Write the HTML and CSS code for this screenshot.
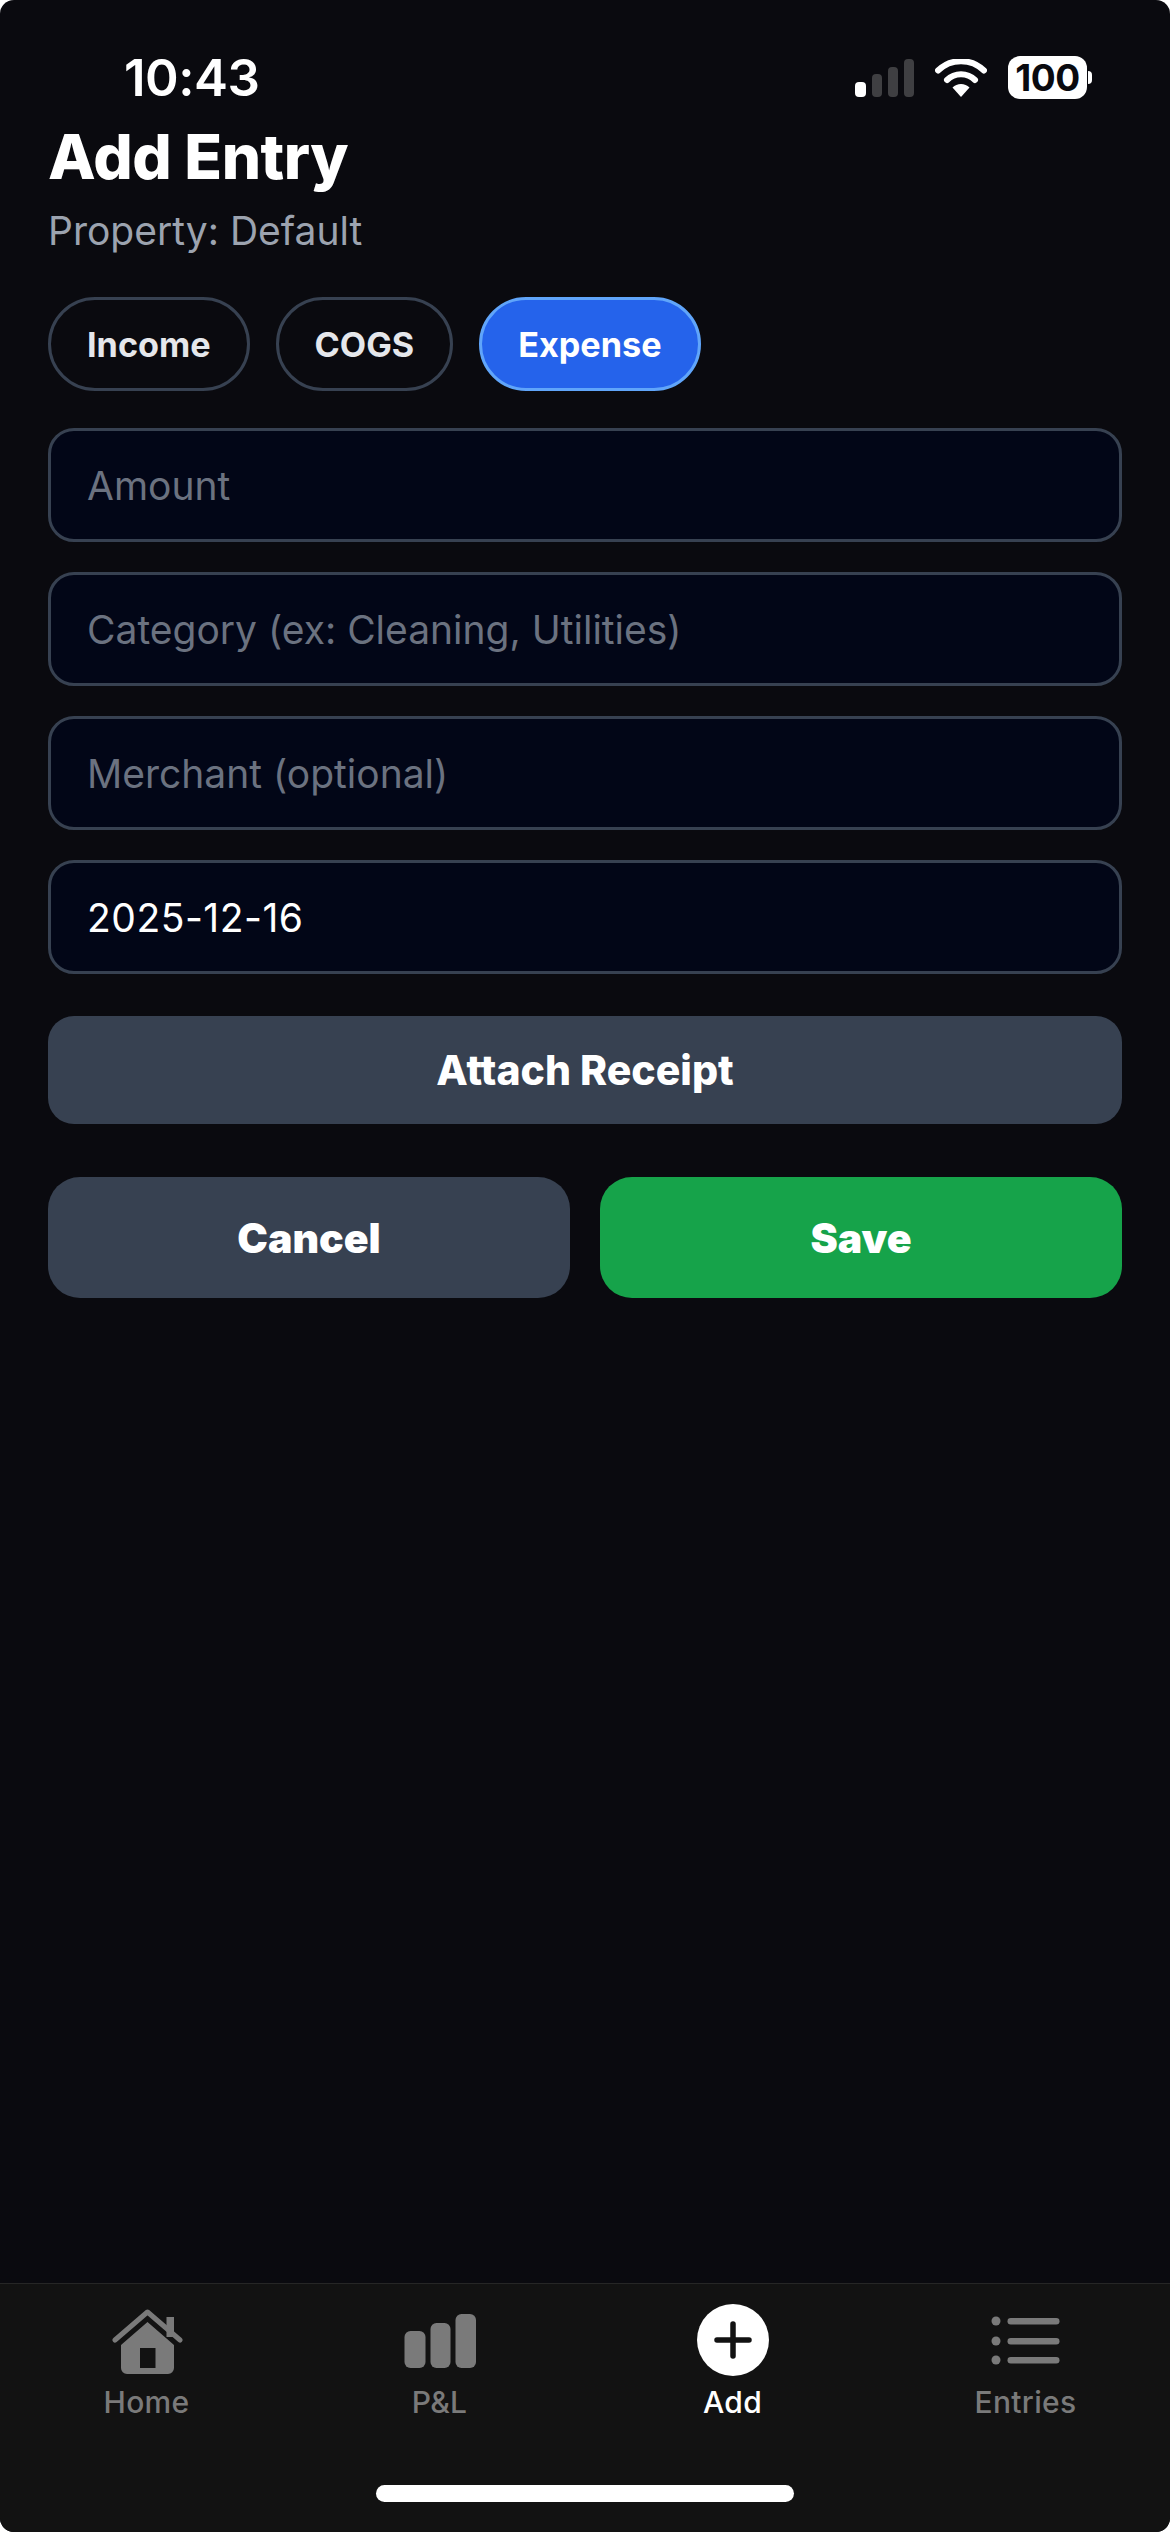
FILE: index.html
```html
<!DOCTYPE html>
<html lang="en">
<head>
<meta charset="utf-8">
<title>Add Entry</title>
<link rel="stylesheet" href="styles.css">
</head>
<body>
<div class="screen">
  <div class="status">
    <span class="time">10:43</span>
    <div class="status-icons">
      <svg class="signal" width="59" height="38" viewBox="0 0 59 38"><rect x="0" y="23" width="11" height="15" rx="4" fill="#fff"/><rect x="17" y="15" width="10" height="23" rx="4" fill="#3f3f42"/><rect x="33" y="8" width="10" height="30" rx="4" fill="#3f3f42"/><rect x="49" y="0" width="10" height="38" rx="4" fill="#3f3f42"/></svg>
      <svg class="wifi" width="52" height="38" viewBox="0 0 52 38"><path d="M3 11.500a33 33 0 0 1 46 0" fill="none" stroke="#fff" stroke-width="6" stroke-linecap="round"/><path d="M12 21a20 20 0 0 1 28 0" fill="none" stroke="#fff" stroke-width="6" stroke-linecap="round"/><path d="M17.500 28.500a12 12 0 0 1 17 0L26 38z" fill="#fff"/></svg>
      <div class="battery"><span class="battery-body">100</span><span class="battery-cap"></span></div>
    </div>
  </div>
  <main class="content">
    <h1 class="title">Add Entry</h1>
    <p class="subtitle">Property: Default</p>
    <div class="chips">
      <span class="chip">Income</span>
      <span class="chip">COGS</span>
      <span class="chip chip-active">Expense</span>
    </div>
    <div class="fields">
      <div class="field placeholder">Amount</div>
      <div class="field placeholder">Category (ex: Cleaning, Utilities)</div>
      <div class="field placeholder">Merchant (optional)</div>
      <div class="field field-value">2025-12-16</div>
    </div>
    <div class="attach">Attach Receipt</div>
    <div class="actions">
      <div class="action action-cancel">Cancel</div>
      <div class="action action-save">Save</div>
    </div>
  </main>
  <nav class="tabbar">
    <div class="tabs">
      <div class="tab">
        <svg class="tab-icon" width="72" height="72" viewBox="0 0 72 72"><path d="M4 36 36.500 8 69 36" fill="none" stroke="#7a7a7a" stroke-width="5" stroke-linecap="round" stroke-linejoin="round"/><path d="M55.500 13H63v20h-7.500z" fill="#7a7a7a"/><path fill-rule="evenodd" d="M36.500 18 63 41v23a6 6 0 0 1-6 6H16a6 6 0 0 1-6-6V41zM29 44v20h15.500V44z" fill="#7a7a7a"/></svg>
        <span class="tab-label">Home</span>
      </div>
      <div class="tab">
        <svg class="tab-icon" width="72" height="72" viewBox="0 0 72 72"><rect x="0.500" y="27" width="21" height="37" rx="6" fill="#7a7a7a"/><rect x="26.500" y="19" width="20" height="45" rx="6" fill="#7a7a7a"/><rect x="51.500" y="10" width="20.500" height="54" rx="6" fill="#7a7a7a"/></svg>
        <span class="tab-label">P&amp;L</span>
      </div>
      <div class="tab tab-active">
        <svg class="tab-icon" width="72" height="72" viewBox="0 0 72 72"><circle cx="36" cy="36" r="36" fill="#fff"/><path d="M36 20v32M20 36h32" stroke="#121212" stroke-width="5.500" stroke-linecap="round"/></svg>
        <span class="tab-label">Add</span>
      </div>
      <div class="tab">
        <svg class="tab-icon" width="72" height="72" viewBox="0 0 72 72"><g fill="#7a7a7a"><circle cx="6" cy="17" r="4.500"/><circle cx="6" cy="37" r="4.500"/><circle cx="6" cy="56" r="4.500"/><rect x="17.500" y="14" width="52" height="6.500" rx="3.250"/><rect x="17.500" y="34" width="52" height="6.500" rx="3.250"/><rect x="17.500" y="53" width="52" height="6.500" rx="3.250"/></g></svg>
        <span class="tab-label">Entries</span>
      </div>
    </div>
    <div class="home-indicator"></div>
  </nav>
</div>
</body>
</html>
```

FILE: styles.css
```css
html, body {
  margin: 0;
  padding: 0;
  background: #fff;
}
.screen {
  width: 1170px;
  height: 2532px;
  box-sizing: border-box;
  display: flex;
  flex-direction: column;
  background: #0a0a0f;
  border-radius: 14px;
  overflow: hidden;
  font-family: Inter, "Liberation Sans", sans-serif;
  color: #fff;
}
.status {
  height: 116px;
  flex: none;
  box-sizing: border-box;
  padding: 52px 78px 0 124px;
  display: flex;
  justify-content: space-between;
  align-items: flex-start;
}
.time {
  font-size: 51px;
  line-height: 52px;
  font-weight: 600;
  letter-spacing: -0.5px;
}
.status-icons {
  display: flex;
  align-items: center;
  gap: 21px;
  padding-top: 4px;
}
.battery {
  display: flex;
  align-items: center;
}
.battery-body {
  width: 79px;
  height: 43px;
  border-radius: 12px;
  background: #fff;
  color: #0a0a0f;
  font-size: 37px;
  line-height: 43px;
  font-weight: 700;
  text-align: center;
  letter-spacing: -0.5px;
}
.battery-cap {
  width: 4px;
  height: 13px;
  background: #fff;
  border-radius: 0 4px 4px 0;
  margin-left: 1px;
}
.content {
  flex: 1;
  padding: 5px 48px 0;
}
.title {
  margin: 0;
  font-size: 62px;
  line-height: 72px;
  font-weight: 800;
  letter-spacing: -0.5px;
}
.subtitle {
  margin: 15px 0 0;
  font-size: 39px;
  line-height: 46px;
  color: #9ca3af;
}
.chips {
  display: flex;
  gap: 26px;
  margin-top: 43px;
}
.chip {
  box-sizing: border-box;
  height: 94px;
  padding: 0 36px;
  display: flex;
  align-items: center;
  border: 3px solid #374151;
  border-radius: 47px;
  font-size: 34.200px;
  font-weight: 700;
  color: #e5e7eb;
}
.chip-active {
  background: #2563eb;
  border-color: #60a5fa;
  color: #fff;
}
.fields {
  display: flex;
  flex-direction: column;
  gap: 30px;
  margin-top: 37px;
}
.field {
  box-sizing: border-box;
  height: 114px;
  padding: 0 36px;
  display: flex;
  align-items: center;
  background: #020617;
  border: 3px solid #374151;
  border-radius: 26px;
  font-size: 39px;
  color: #fff;
}
.field-value {
  letter-spacing: 0.5px;
}
.placeholder {
  color: #6b7280;
}
.attach {
  height: 108px;
  margin-top: 42px;
  display: flex;
  align-items: center;
  justify-content: center;
  background: #374151;
  border-radius: 26px;
  font-size: 41px;
  font-weight: 800;
}
.actions {
  display: flex;
  gap: 30px;
  margin-top: 53px;
}
.action {
  flex: 1;
  height: 121px;
  display: flex;
  align-items: center;
  justify-content: center;
  border-radius: 32px;
  font-size: 41px;
  font-weight: 900;
}
.action-cancel {
  background: #374151;
}
.action-save {
  background: #16a34a;
}
.tabbar {
  flex: none;
  height: 249px;
  box-sizing: border-box;
  background: #121212;
  border-top: 1px solid #262626;
  display: flex;
  flex-direction: column;
  align-items: stretch;
}
.tabs {
  display: grid;
  grid-template-columns: repeat(4, 293px);
  justify-content: start;
}
.tab {
  display: flex;
  flex-direction: column;
  align-items: center;
  padding-top: 20px;
  color: #7a7a7a;
}
.tab-icon {
  display: block;
}
.tab-label {
  margin-top: 8px;
  font-size: 30px;
  line-height: 36px;
  font-weight: 500;
  letter-spacing: 0.3px;
}
.tab-active {
  color: #fff;
}
.home-indicator {
  align-self: center;
  width: 418px;
  height: 17px;
  margin-top: 65px;
  background: #fff;
  border-radius: 9px;
}
```
